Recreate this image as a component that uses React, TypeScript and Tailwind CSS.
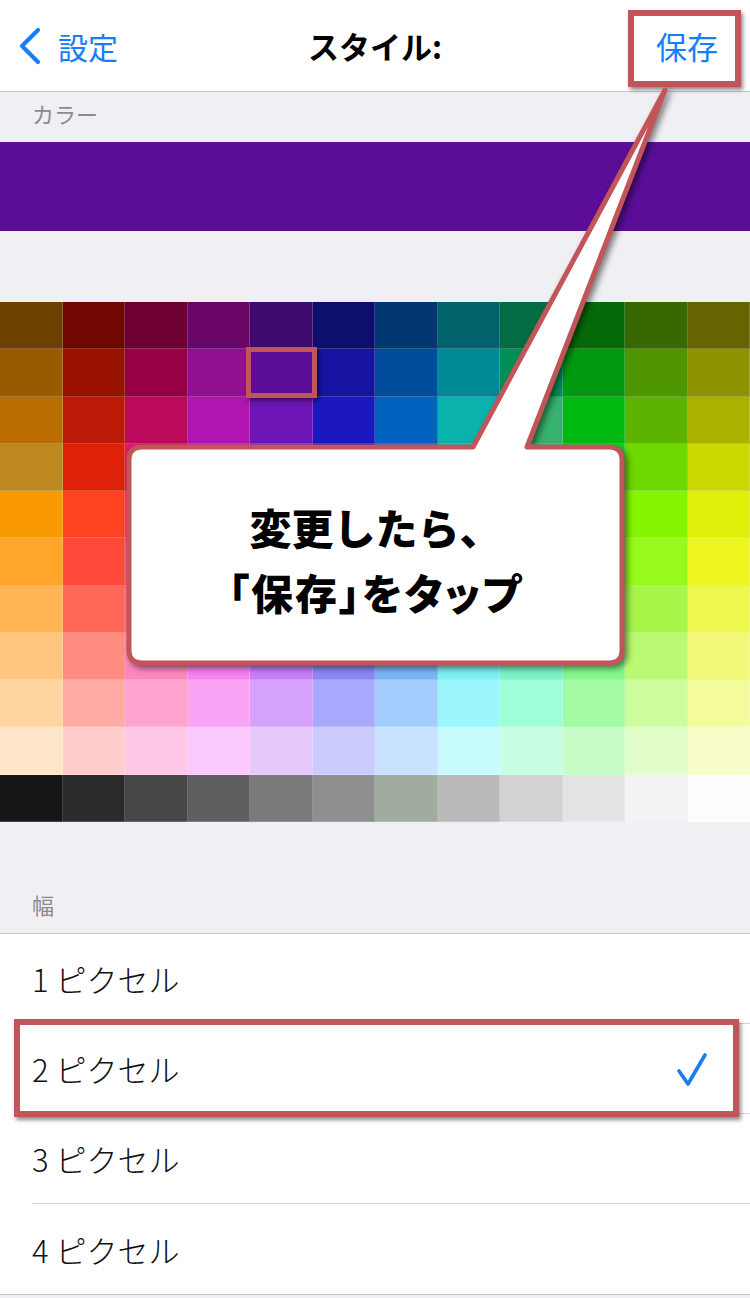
import React from "react";

const GRID: string[][] = [
  ["#6e4000", "#700700", "#6e0034", "#6a0668", "#3f0a6d", "#0d0e6e", "#003770", "#00636c", "#046c44", "#056b0a", "#376900", "#656400"],
  ["#995a00", "#991200", "#980044", "#921090", "#5b0d98", "#1613a0", "#004e9b", "#008a96", "#009057", "#029910", "#4e9500", "#8d9200"],
  ["#bb6c00", "#bb1a06", "#bb0a5b", "#b115b0", "#6e15b8", "#1a17bd", "#0063be", "#0ab2ac", "#36b36e", "#00ba11", "#5cb300", "#abb100"],
  ["#be8820", "#de2109", "#dc1a6e", "#d51ad3", "#8a1de0", "#2b23e0", "#0a7ae0", "#12d3d6", "#2bd48a", "#13d620", "#6fd800", "#cbd800"],
  ["#f99a00", "#ff4220", "#ff2d8a", "#f53bf1", "#a03cf6", "#4a43f5", "#2a90f2", "#2ae6ea", "#3ee9a0", "#35ec3f", "#84f600", "#e0ef0a"],
  ["#ffa62a", "#ff4a3a", "#ff4d9b", "#f850f5", "#ae52f8", "#5f59f6", "#479ff4", "#47eaee", "#55edad", "#52f058", "#98fa1c", "#eef622"],
  ["#ffb455", "#ff6858", "#ff6aae", "#f86af5", "#ba69f9", "#7570f5", "#62aaf4", "#62eef1", "#69f0b9", "#6bf472", "#a8f649", "#eef74e"],
  ["#ffc680", "#ff8c80", "#ff87c0", "#f784f0", "#c77ef8", "#8b88f5", "#7bb4f4", "#7ff0f4", "#7df3c8", "#84f88a", "#bafa72", "#f1f87a"],
  ["#ffd6a2", "#ffaaa4", "#ffa3cf", "#fba4f6", "#d5a1fb", "#aaa8fd", "#a4cdff", "#9cf7fc", "#9cffd8", "#a4fba3", "#ccfc9c", "#f4fb9a"],
  ["#ffe6c8", "#ffcdcb", "#ffc8e6", "#fbc8fd", "#e6c8fd", "#cccbfd", "#c9e2ff", "#c8fbfd", "#c8ffe4", "#c9fdc8", "#e1fdc8", "#f8fcc8"],
  ["#161616", "#2b2b2b", "#474747", "#5f5f5f", "#7a7a7a", "#8f8f8f", "#a1aca1", "#bababa", "#d2d2d2", "#e4e4e4", "#f3f3f3", "#fdfdfb"],
];

const FONT = { fontFamily: '"Noto Sans CJK JP", "Noto Sans", sans-serif' };

function Row({ label, last, checked }: { label: string; last?: boolean; checked?: boolean }) {
  return (
    <div className="h-[90px] bg-white pl-[32px] flex">
      <div
        className={
          "flex-1 flex items-center justify-between pr-[42px] " +
          (last ? "" : "border-b border-[#d6d6da]")
        }
      >
        <span className="text-[31px] font-light text-[#111] leading-none">{label}</span>
        {checked ? (
          <svg width="32" height="36" viewBox="0 0 32 36" className="mt-[2px]">
            <path d="M3 19 L12 32 L29 3" fill="none" stroke="#1a7cf4" strokeWidth="3.6" strokeLinecap="round" strokeLinejoin="round" />
          </svg>
        ) : null}
      </div>
    </div>
  );
}

export default function App() {
  return (
    <div className="relative w-[750px] h-[1298px] overflow-hidden bg-[#efeff4]" style={FONT}>
      {/* nav bar */}
      <div className="h-[92px] bg-white border-b border-[#c8c7cc] flex items-center justify-between px-[18px] relative">
        <div className="flex items-center gap-[16px]">
          <svg width="24" height="38" viewBox="0 0 24 38">
            <path d="M20 3 L4 19 L20 35" fill="none" stroke="#147efb" strokeWidth="4.2" strokeLinecap="round" strokeLinejoin="round" />
          </svg>
          <span className="text-[30px] text-[#147efb] leading-none">設定</span>
        </div>
        <span className="absolute left-1/2 -translate-x-1/2 text-[31px] font-bold text-black leading-none">スタイル:</span>
        <span className="text-[31px] text-[#147efb] leading-none mr-[14px]">保存</span>
      </div>

      {/* color section */}
      <div className="h-[50px] flex items-center pl-[32px] pb-[8px]">
        <span className="text-[22px] text-[#8a8a8f] leading-none">カラー</span>
      </div>
      <div className="h-[89px] bg-[#5b0d98]" />
      <div className="h-[71px]" />
      <div className="grid grid-cols-12 grid-rows-11 h-[520px]">
        {GRID.flatMap((row, r) =>
          row.map((c, i) => (
            <div
              key={r + "-" + i}
              className="border-r border-b border-white/20"
              style={{ backgroundColor: c }}
            />
          ))
        )}
      </div>

      {/* width section */}
      <div className="h-[112px] flex items-end pl-[32px] pb-[18px] border-b border-[#c8c7cc]">
        <span className="text-[22px] text-[#8a8a8f] leading-none">幅</span>
      </div>
      <div className="border-b border-[#c8c7cc]">
        <Row label="1 ピクセル" />
        <Row label="2 ピクセル" checked />
        <Row label="3 ピクセル" />
        <Row label="4 ピクセル" last />
      </div>

      {/* annotations */}
      <div className="absolute left-[628px] top-[10px] w-[113px] h-[77px] border-[6px] border-[#c25559] shadow-[2px_3px_4px_rgba(0,0,0,0.45)]" />
      <div className="absolute left-[246px] top-[347px] w-[71px] h-[51px] border-[5px] border-[#c25559] shadow-[2px_3px_4px_rgba(0,0,0,0.45)]" />
      <div className="absolute left-[14px] top-[1019px] w-[725px] h-[98px] border-[6px] border-[#c25559] shadow-[2px_3px_4px_rgba(0,0,0,0.45)]" />

      <svg
        className="absolute left-0 top-0 drop-shadow-[3px_3px_3px_rgba(0,0,0,0.5)]"
        width="750"
        height="1298"
        viewBox="0 0 750 1298"
      >
        <path
          d="M142 447 L473 447 L665 90 L527 447 L609 447 Q622 447 622 460 L622 650 Q622 663 609 663 L142 663 Q129 663 129 650 L129 460 Q129 447 142 447 Z"
          fill="#ffffff"
          stroke="#c25559"
          strokeWidth="5"
          strokeLinejoin="round"
        />
      </svg>
      <div className="absolute left-[129px] top-[447px] w-[493px] h-[216px] flex flex-col items-center justify-center pt-[8px]">
        <span className="text-[42px] font-black text-black leading-[65px]">変更したら、</span>
        <span className="text-[42px] font-black text-black leading-[65px] [font-feature-settings:'palt'] tracking-[2px]">「保存」をタップ</span>
      </div>
    </div>
  );
}
